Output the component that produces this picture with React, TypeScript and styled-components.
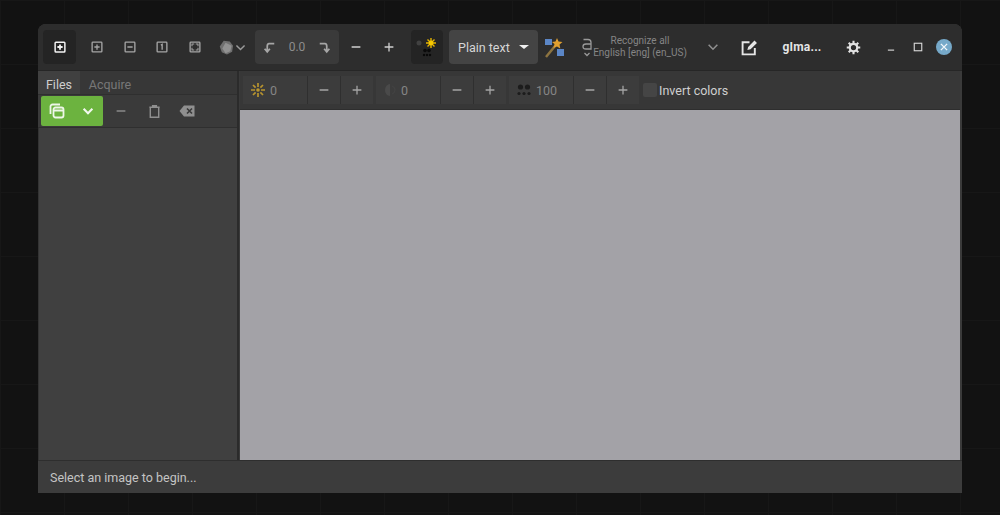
import styled, { createGlobalStyle } from "styled-components";
import { ReactNode } from "react";

const GlobalStyle = createGlobalStyle`
  html, body {
    margin: 0;
    padding: 0;
    height: 100%;
    background: #121212;
  }
  * {
    box-sizing: border-box;
  }
`;

const Desktop = styled.main`
  width: 1000px;
  height: 515px;
  padding: 24px 38px 22px;
  overflow: hidden;
  background-color: #121212;
  background-image: linear-gradient(#171717 1px, transparent 1px),
    linear-gradient(90deg, #171717 1px, transparent 1px);
  background-size: 64px 64px;
  font-family: Roboto, "Noto Sans", sans-serif;
`;

const Window = styled.div`
  width: 924px;
  height: 469px;
  display: flex;
  flex-direction: column;
  border-radius: 8px 8px 0 0;
  overflow: hidden;
  background: #3a3a3a;
`;

const HeaderBar = styled.header`
  height: 47px;
  flex: none;
  display: flex;
  align-items: center;
  padding: 0 5px;
  background: #2d2d2d;
  border-bottom: 1px solid #262626;
`;

const Slot = styled.div<{ $w: number; $ml?: number }>`
  width: ${(p) => p.$w}px;
  margin-left: ${(p) => p.$ml ?? 0}px;
  height: 34px;
  flex: none;
  display: flex;
  align-items: center;
  justify-content: center;
  color: #cfcfcf;
`;

const DarkButton = styled(Slot)`
  background: #242424;
  border-radius: 4px;
`;

const RotateGroup = styled(Slot)`
  background: #3a3a3a;
  border-radius: 4px;
  justify-content: space-between;
  padding: 0 7px;
`;

const RotateValue = styled.span`
  font-size: 12px;
  color: #8d8d8d;
`;

const Combo = styled(Slot)`
  background: #444444;
  border-radius: 4px;
  justify-content: space-between;
  padding: 0 9px;
  font-size: 12.5px;
  color: #d6d6d6;
`;

const ComboArrow = styled.span`
  width: 0;
  height: 0;
  border-left: 5px solid transparent;
  border-right: 5px solid transparent;
  border-top: 4px solid #f0f0f0;
`;

const LanguageText = styled.div`
  width: 90px;
  flex: none;
  white-space: nowrap;
  display: flex;
  flex-direction: column;
  align-items: center;
  font-size: 10px;
  line-height: 12px;
  color: #858585;
`;

const AppTitle = styled(Slot)`
  font-size: 12px;
  font-weight: 700;
  letter-spacing: 0.2px;
  color: #e4e4e4;
`;

const CloseCircle = styled.span`
  width: 16px;
  height: 16px;
  border-radius: 50%;
  background: #76a9c9;
  display: flex;
  align-items: center;
  justify-content: center;
`;

const Body = styled.div`
  flex: 1;
  min-height: 0;
  display: flex;
`;

const Sidebar = styled.aside`
  width: 200px;
  flex: none;
  display: flex;
  flex-direction: column;
  border-right: 1px solid #2b2b2b;
  margin-right: 2px;
  box-shadow: 1px 0 0 #2b2b2b;
`;

const Tabs = styled.div`
  height: 24px;
  flex: none;
  display: flex;
  background: #373737;
  border-bottom: 1px solid #2f2f2f;
`;

const Tab = styled.div<{ $active?: boolean }>`
  width: ${(p) => (p.$active ? 42 : 60)}px;
  display: flex;
  align-items: center;
  justify-content: center;
  padding-top: 4px;
  font-size: 12.5px;
  color: ${(p) => (p.$active ? "#cfcfcf" : "#777777")};
  background: ${(p) => (p.$active ? "#404040" : "transparent")};
`;

const FileToolbar = styled.div`
  height: 33px;
  flex: none;
  display: flex;
  align-items: center;
  padding-left: 3px;
  background: #3a3a3a;
  border-bottom: 1px solid #2f2f2f;
`;

const GreenButton = styled.div`
  width: 62px;
  height: 30px;
  display: flex;
  border-radius: 2px;
  background: #6cb33f;
`;

const GreenPart = styled.div<{ $w: number }>`
  width: ${(p) => p.$w}px;
  display: flex;
  align-items: center;
  justify-content: center;
`;

const ToolIcon = styled.div<{ $w: number }>`
  width: ${(p) => p.$w}px;
  height: 30px;
  display: flex;
  align-items: center;
  justify-content: center;
`;

const FileList = styled.div`
  flex: 1;
  background: #404040;
  border-left: 1px solid #333333;
`;

const Content = styled.section`
  flex: 1;
  min-width: 0;
  display: flex;
  flex-direction: column;
  margin-right: 2px;
`;

const AdjustBar = styled.div`
  height: 39px;
  flex: none;
  display: flex;
  align-items: center;
  padding-left: 3px;
  background: #373737;
  border-bottom: 1px solid #2e2e2e;
`;

const Field = styled.div`
  width: 64px;
  height: 28px;
  flex: none;
  display: flex;
  align-items: center;
  gap: 4px;
  padding-left: 7px;
  background: #3c3c3c;
  font-size: 12.5px;
  color: #858585;
`;

const StepButton = styled.div`
  width: 33px;
  height: 28px;
  flex: none;
  display: flex;
  align-items: center;
  justify-content: center;
  background: #3c3c3c;
  border-left: 1px solid #2f2f2f;
`;

const StepGroup = styled.div`
  display: flex;
  margin-right: 3px;
`;

const Check = styled.span`
  width: 14px;
  height: 14px;
  margin-left: 1px;
  background: #454545;
  border-radius: 2px;
`;

const CheckLabel = styled.span`
  margin-left: 2px;
  font-size: 12.5px;
  color: #cfcfcf;
`;

const Canvas = styled.div`
  flex: 1;
  background: #a3a2a7;
`;

const StatusBar = styled.footer`
  height: 33px;
  flex: none;
  display: flex;
  align-items: center;
  padding-left: 12px;
  background: #3c3c3c;
  border-top: 1px solid #2e2e2e;
  font-size: 12.5px;
  color: #c4c4c4;
`;

function Ico({ size = 14, children, color = "#bdbdbd", sw = 1.5 }: { size?: number; children: ReactNode; color?: string; sw?: number }) {
  return (
    <svg width={size} height={size} viewBox="0 0 16 16" fill="none" stroke={color} strokeWidth={sw} aria-hidden="true">
      {children}
    </svg>
  );
}

const Minus = ({ color = "#bdbdbd" }: { color?: string }) => (
  <Ico size={14} color={color}>
    <path d="M3 8h10" />
  </Ico>
);

const Plus = ({ color = "#bdbdbd" }: { color?: string }) => (
  <Ico size={14} color={color}>
    <path d="M3 8h10M8 3v10" />
  </Ico>
);

const Chevron = ({ color = "#a8a8a8", size = 14, sw = 1.8 }: { color?: string; size?: number; sw?: number }) => (
  <Ico size={size} color={color} sw={sw}>
    <path d="M3 5.5 8 10.5l5-5" />
  </Ico>
);

const ZoomBox = ({ color, sw = 1.8, children }: { color: string; sw?: number; children: ReactNode }) => (
  <Ico size={12} color={color} sw={sw}>
    <rect x="1.5" y="1.5" width="13" height="13" rx="1" />
    {children}
  </Ico>
);

const Sun = ({ size = 16, color = "#b8942e" }: { size?: number; color?: string }) => (
  <Ico size={size} color={color} sw={1.7}>
    <circle cx="8" cy="8" r="1.8" fill={color} stroke="none" />
    <path d="M8 1v4M8 11v4M1 8h4M11 8h4M3 3l2.6 2.6M10.4 10.4 13 13M13 3l-2.6 2.6M5.6 10.4 3 13" />
  </Ico>
);

const Dots = ({ color = "#1c1c1c", size = 16 }: { color?: string; size?: number }) => (
  <svg width={size} height={size} viewBox="0 0 16 16" fill={color} aria-hidden="true">
    <circle cx="4.5" cy="5" r="2.6" />
    <circle cx="11.5" cy="5" r="2.6" />
    <circle cx="3" cy="11.5" r="1.6" />
    <circle cx="8" cy="11.5" r="1.6" />
    <circle cx="13" cy="11.5" r="1.6" />
  </svg>
);

const Contrast = () => (
  <svg width="14" height="16" viewBox="0 0 14 16" aria-hidden="true">
    <path d="M7 2a5 6 0 0 0-5 6c0 3 2 6 5 6z" fill="#4a4a4a" />
    <path d="M9 4c2 1 3 2.500 3 4s-1 3-3 4" fill="none" stroke="#424242" strokeWidth="1.200" />
  </svg>
);

function Stepper() {
  return (
    <StepGroup>
      <StepButton>
        <Minus color="#a4a4a4" />
      </StepButton>
      <StepButton>
        <Plus color="#a4a4a4" />
      </StepButton>
    </StepGroup>
  );
}

export default function App() {
  return (
    <Desktop>
      <GlobalStyle />
      <Window>
        <HeaderBar>
          <DarkButton $w={33}>
            <ZoomBox color="#f2f2f2" sw={2}>
              <path d="M8 4.500v7M4.500 8h7" stroke="#f2f2f2" strokeWidth="2.400" />
            </ZoomBox>
          </DarkButton>
          <Slot $w={32.5} $ml={5}>
            <ZoomBox color="#a5a5a5">
              <path d="M8 4.500v7M4.500 8h7" />
            </ZoomBox>
          </Slot>
          <Slot $w={32.5}>
            <ZoomBox color="#a5a5a5">
              <path d="M4.500 8h7" />
            </ZoomBox>
          </Slot>
          <Slot $w={32.5}>
            <ZoomBox color="#a5a5a5">
              <path d="M6.500 5.500 8.200 4.500v7" />
            </ZoomBox>
          </Slot>
          <Slot $w={32.5}>
            <ZoomBox color="#a5a5a5">
              <path d="M4 7V4h3M9 4h3v3M12 9v3H9M7 12H4V9" strokeWidth="1.400" />
            </ZoomBox>
          </Slot>
          <Slot $w={44}>
            <svg width="15" height="15" viewBox="0 0 16 16" aria-hidden="true">
              <path d="M5 .8 11.500 1.500l3.500 4.500-1 6.500-5.500 3L3 13 .8 7z" fill="#6f6f6f" />
              <path d="M7 3l6.500 3-1.500 6-5 2L3.500 9z" fill="#919191" />
            </svg>
            <Chevron size={13} color="#9a9a9a" />
          </Slot>
          <RotateGroup $w={84}>
            <Ico size={14} color="#a6a6a6" sw={2}>
              <path d="M14 4H8C6 4 6 6 6 7v6M3 10l3 3.500 3-3.500" />
            </Ico>
            <RotateValue>0.0</RotateValue>
            <Ico size={14} color="#a6a6a6" sw={2}>
              <path d="M2 4h6c2 0 2 2 2 3v6M7 10l3 3.500 3-3.500" />
            </Ico>
          </RotateGroup>
          <Slot $w={33}>
            <Minus color="#d0d0d0" />
          </Slot>
          <Slot $w={33}>
            <Plus color="#d0d0d0" />
          </Slot>
          <DarkButton $w={32} $ml={6}>
            <svg width="26" height="26" viewBox="0 0 26 26" aria-hidden="true">
              <circle cx="5" cy="9" r="2.500" fill="#414141" />
              <g stroke="#e6b400" strokeWidth="1.400">
                <path d="M17 4v10M12 9h10M13.500 5.500l7 7M20.500 5.500l-7 7" />
              </g>
              <circle cx="17" cy="9" r="2.400" fill="#f5c800" />
              <g fill="#0a0a0a">
                <circle cx="11" cy="16.500" r="1.800" />
                <circle cx="15" cy="16.500" r="1.800" />
                <circle cx="10" cy="21" r="1.200" />
                <circle cx="13" cy="21" r="1.200" />
                <circle cx="16" cy="21" r="1.200" />
              </g>
            </svg>
          </DarkButton>
          <Combo $w={89} $ml={6}>
            Plain text
            <ComboArrow />
          </Combo>
          <Slot $w={32}>
            <svg width="21" height="21" viewBox="0 0 21 21" aria-hidden="true">
              <rect x="1" y="2" width="7" height="6" fill="#5b86c6" />
              <rect x="13" y="12" width="7" height="7" fill="#5b86c6" />
              <path d="M2 20 11 9" stroke="#8d7440" strokeWidth="2.500" />
              <path d="M13 1l1.500 3.500L18.500 5l-3 2.500.8 4L13 9.500 9.500 11l1-4L8 5l3.500-.5z" fill="#e0a030" />
            </svg>
          </Slot>
          <Slot $w={17} $ml={8}>
            <svg width="12" height="19" viewBox="0 0 12 19" fill="none" stroke="#9a9a9a" strokeWidth="1.300" aria-hidden="true">
              <path d="M2.500 1.500H7c2 0 3 1 3 3v6.500H5c-2 0-3-.8-3-2.500S3 6 5 6h5" />
              <path d="M3.500 15 6 17.500 8.500 15" />
            </svg>
          </Slot>
          <LanguageText>
            <span>Recognize all</span>
            <span>English [eng] (en_US)</span>
          </LanguageText>
          <Slot $w={20} $ml={18}>
            <Chevron color="#8f8f8f" />
          </Slot>
          <Slot $w={33} $ml={10}>
            <Ico size={17} color="#e6e6e6" sw={1.800}>
              <path d="M13 8.500V14.500H1.500V3H8" />
              <path d="M6 10.300 6.700 7.500 12.700 1.500 15 3.800 9 9.700z" fill="#e6e6e6" stroke="none" />
            </Ico>
          </Slot>
          <AppTitle $w={60} $ml={6}>
            gIma...
          </AppTitle>
          <Slot $w={33} $ml={5}>
            <svg width="15" height="15" viewBox="0 0 16 16" fill="none" stroke="#e2e2e2" aria-hidden="true">
              <circle cx="8" cy="8" r="4" strokeWidth="2.400" />
              <path d="M8 .8v3M8 12.200v3M.8 8h3M12.200 8h3M2.900 2.900l2.100 2.100M11 11l2.100 2.100M13.100 2.900 11 5M5 11l-2.100 2.100" strokeWidth="2.200" />
            </svg>
          </Slot>
          <Slot $w={26} $ml={8}>
            <Ico size={10} color="#c8c8c8" sw={1.800}>
              <path d="M3 13h10" />
            </Ico>
          </Slot>
          <Slot $w={28}>
            <Ico size={10} color="#d8d8d8" sw={1.800}>
              <rect x="2" y="2" width="12" height="12" />
            </Ico>
          </Slot>
          <Slot $w={24}>
            <CloseCircle>
              <Ico size={10} color="#f0f6fa" sw={2.200}>
                <path d="m3 3 10 10M13 3 3 13" />
              </Ico>
            </CloseCircle>
          </Slot>
        </HeaderBar>
        <Body>
          <Sidebar>
            <Tabs>
              <Tab $active>Files</Tab>
              <Tab>Acquire</Tab>
            </Tabs>
            <FileToolbar>
              <GreenButton>
                <GreenPart $w={32}>
                  <svg width="16" height="16" viewBox="0 0 16 16" fill="none" stroke="#eef6e8" strokeWidth="1.800" aria-hidden="true">
                    <path d="M1.500 11V3.500c0-1 .8-2 2-2H11" />
                    <rect x="4.500" y="4.500" width="10" height="10" rx="2" fill="#6cb33f" />
                    <path d="M4.500 7.500h10" />
                  </svg>
                </GreenPart>
                <GreenPart $w={30}>
                  <Chevron color="#f2f8ee" sw={2.400} />
                </GreenPart>
              </GreenButton>
              <ToolIcon $w={36}>
                <Minus color="#8a8a8a" />
              </ToolIcon>
              <ToolIcon $w={30}>
                <Ico size={15} color="#8f8f8f" sw={1.500}>
                  <path d="M2.500 3.500h11M6 3.500V1.800h4v1.700M3.500 3.500V14.200h9V3.500" />
                </Ico>
              </ToolIcon>
              <ToolIcon $w={36}>
                <svg width="16" height="12" viewBox="0 0 16 12" aria-hidden="true">
                  <path d="M5 .5h10.500v11H5L.5 6z" fill="#8f8f8f" />
                  <path d="m8 3.500 5 5M13 3.500l-5 5" stroke="#383838" strokeWidth="1.600" />
                </svg>
              </ToolIcon>
            </FileToolbar>
            <FileList />
          </Sidebar>
          <Content>
            <AdjustBar>
              <Field>
                <Sun />
                0
              </Field>
              <Stepper />
              <Field>
                <Contrast />
                0
              </Field>
              <Stepper />
              <Field>
                <Dots />
                100
              </Field>
              <Stepper />
              <Check />
              <CheckLabel>Invert colors</CheckLabel>
            </AdjustBar>
            <Canvas />
          </Content>
        </Body>
        <StatusBar>Select an image to begin...</StatusBar>
      </Window>
    </Desktop>
  );
}
